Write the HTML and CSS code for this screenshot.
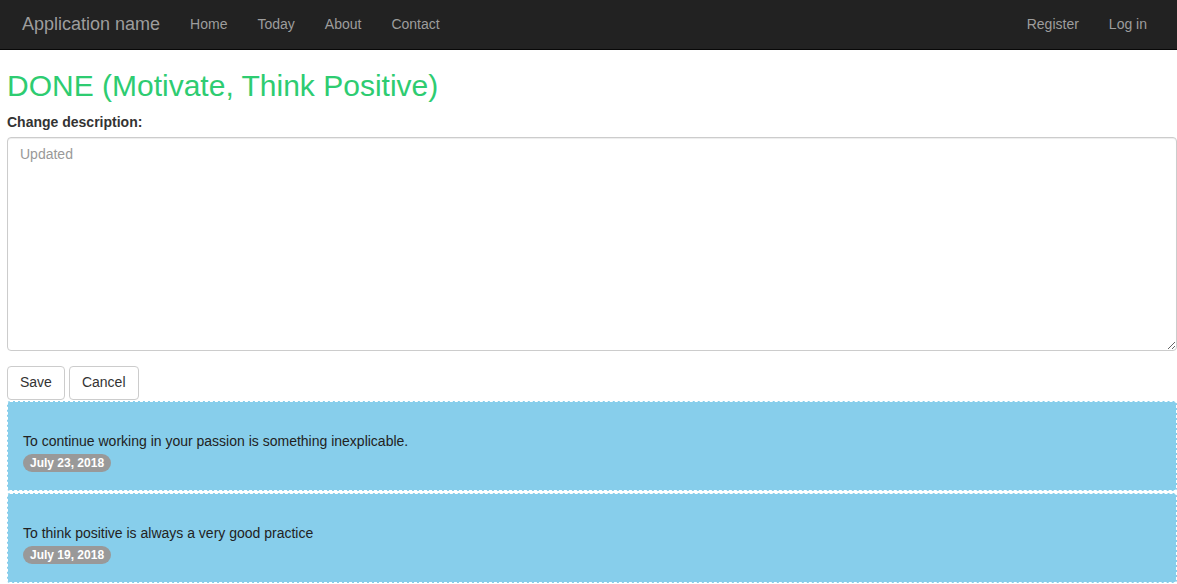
FILE: index.html
```html
<!DOCTYPE html>
<html>
<head>
<meta charset="utf-8">
<title>DONE</title>
<link rel="stylesheet" href="styles.css">
</head>
<body>
<nav class="navbar">
  <div class="nav-left">
    <a class="brand" href="#">Application name</a>
    <a class="nav-link" href="#">Home</a>
    <a class="nav-link" href="#">Today</a>
    <a class="nav-link" href="#">About</a>
    <a class="nav-link" href="#">Contact</a>
  </div>
  <div class="nav-right">
    <a class="nav-link" href="#">Register</a>
    <a class="nav-link" href="#">Log in</a>
  </div>
</nav>
<main class="content">
  <h2 class="title">DONE (Motivate, Think Positive)</h2>
  <form class="edit-form">
    <div class="form-group">
      <label class="label" for="desc">Change description:</label>
      <textarea id="desc" class="textarea" placeholder="Updated"></textarea>
    </div>
    <div class="actions">
      <button type="button" class="btn">Save</button>
      <button type="button" class="btn">Cancel</button>
    </div>
  </form>
  <div class="entries">
    <div class="entry">
      <p class="entry-text">To continue working in your passion is something inexplicable.</p>
      <span class="badge">July 23, 2018</span>
    </div>
    <div class="entry">
      <p class="entry-text">To think positive is always a very good practice</p>
      <span class="badge">July 19, 2018</span>
    </div>
  </div>
</main>
</body>
</html>
```
FILE: styles.css
```css
* { box-sizing: border-box; }
html, body { margin: 0; padding: 0; }
body {
  font-family: "Liberation Sans", Arial, sans-serif;
  font-size: 14px;
  line-height: 1.42857;
  color: #333;
  background: #fff;
}
.navbar {
  height: 50px;
  background: #222;
  border-bottom: 1px solid #080808;
  display: flex;
  justify-content: space-between;
  align-items: stretch;
}
.nav-left, .nav-right {
  display: flex;
  align-items: center;
}
.nav-right { padding-right: 15px; }
.brand {
  color: #9d9d9d;
  font-size: 18px;
  line-height: 20px;
  padding: 14px 15px 15px 22px;
  text-decoration: none;
}
.nav-link {
  color: #9d9d9d;
  text-decoration: none;
  padding: 14px 15px 15px;
  line-height: 20px;
}
.content {
  padding: 0 0 0 7px;
}
.title {
  color: #2ecc71;
  font-weight: 400;
  font-size: 30px;
  line-height: 1.1;
  margin: 19px 0 11px;
}
.form-group { margin-bottom: 15px; }
.label {
  display: block;
  font-weight: 700;
  margin-bottom: 4px;
}
.textarea {
  display: block;
  width: 100%;
  height: 214px;
  padding: 7px 12px 6px;
  font-family: inherit;
  font-size: 14px;
  line-height: 1.42857;
  color: #555;
  border: 1px solid #ccc;
  border-radius: 4px;
  box-shadow: inset 0 1px 1px rgba(0,0,0,0.075);
  resize: vertical;
}
.textarea::placeholder { color: #999; }
.actions {
  display: flex;
  gap: 4px;
  margin-bottom: 1px;
}
.btn {
  font-family: inherit;
  font-size: 14px;
  line-height: 1.42857;
  padding: 6px 12px;
  color: #333;
  background: #fff;
  border: 1px solid #ccc;
  border-radius: 4px;
  cursor: pointer;
}
.entries {
  display: flex;
  flex-direction: column;
  gap: 2px;
}
.entry {
  background: #87ceeb;
  border: 1px dashed #fff;
  border-radius: 3px;
  padding: 30px 15px 19px;
  height: 90px;
}
.entry-text {
  margin: 0 0 1px;
  color: #222;
}
.badge {
  display: inline-block;
  background: #999;
  color: #fff;
  font-size: 12px;
  font-weight: 700;
  line-height: 1;
  padding: 3px 7px;
  border-radius: 10px;
}
```
